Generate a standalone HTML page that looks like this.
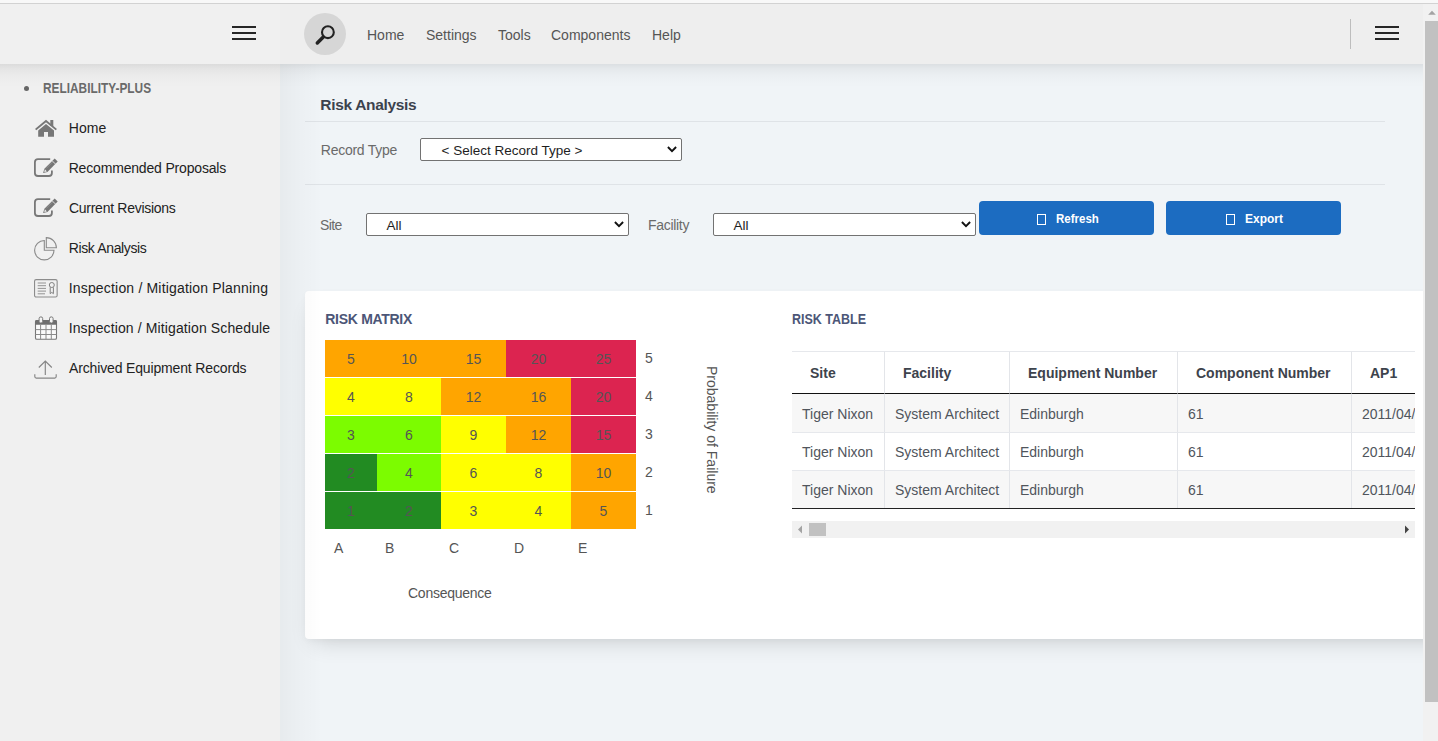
<!DOCTYPE html>
<html lang="en">
<head>
<meta charset="utf-8">
<title>Risk Analysis</title>
<style>
*{box-sizing:border-box;margin:0;padding:0}
html,body{width:1438px;height:741px;overflow:hidden}
body{position:relative;background:#f0f4f7;font-family:"Liberation Sans",sans-serif;font-size:14px;color:#555}
.abs{position:absolute}
.t{position:absolute;white-space:nowrap;line-height:20px;height:20px}
/* top chrome strip */
#strip{left:0;top:0;width:1438px;height:3px;background:#f8f8f8}
#stripline{left:0;top:3px;width:1438px;height:1px;background:#d2d2d2}
/* header */
#hdrL{left:0;top:4px;width:280px;height:60px;background:#f0f0f0}
#hdrR{left:280px;top:4px;width:1143px;height:60px;background:#eeeeee}
#hdrShadow{left:0;top:64px;width:1423px;height:24px;z-index:6;background:linear-gradient(to bottom,rgba(0,0,0,.088),rgba(0,0,0,.048) 20%,rgba(0,0,0,.024) 45%,rgba(0,0,0,.008) 75%,rgba(0,0,0,0))}
/* sidebar */
#side{left:0;top:64px;width:280px;height:677px;background:#f0f0f0}
#sideShadow{left:280px;top:64px;width:42px;height:677px;z-index:5;background:linear-gradient(to right,rgba(0,0,0,.04),rgba(0,0,0,.027) 25%,rgba(0,0,0,.016) 55%,rgba(0,0,0,.006) 82%,rgba(0,0,0,0))}
.nav{color:#555;font-size:14px}
.sb{color:#222;font-size:14px}
.ico{position:absolute;overflow:visible}
/* page scrollbar */
#sbTrack{left:1423px;top:4px;width:15px;height:737px;background:#f1f1f1}
#sbThumb{left:1425px;top:21px;width:13px;height:681px;background:#c1c1c1}
/* content */
.hr{position:absolute;left:305px;width:1080px;height:1px;background:#dfe3e7}
.sel{position:absolute;height:23px;width:263px;background:#fff;border:1px solid #727272;border-radius:2px}
.sel span{position:absolute;top:1.7px;line-height:20px;font-size:13.5px;color:#1e1e1e;white-space:nowrap}
.sel svg{position:absolute;right:4px;top:7px}
.btn{position:absolute;top:201px;width:175px;height:34px;background:#1c6cc1;border-radius:4px;color:#fff;font-weight:bold;font-size:13.5px}
.btn i{position:absolute;top:13px;width:9px;height:11px;border:1.2px solid #fff}
.btn span{position:absolute;top:8px;line-height:20px;white-space:nowrap;transform-origin:0 50%}
/* card */
#card{left:305px;top:291px;width:1170px;height:348px;background:#fff;border-radius:4px 0 0 4px;box-shadow:0 11px 22px -9px rgba(0,0,0,.16),0 2px 6px rgba(0,0,0,.03)}
.ctitle{font-weight:bold;font-size:14px;color:#4c5677;transform-origin:0 50%}
/* matrix */
.cell{position:absolute;height:37px;line-height:39px;text-align:center;font-size:14px;color:#555}
.or{background:#ffa500}.cr{background:#dc2450}.ye{background:#ffff00}.lg{background:#7cfc00}.fg{background:#228b22}
.lab{color:#555;font-size:14px}
/* table */
#tblwrap{left:792px;top:351px;width:623px;height:159px;overflow:hidden}
.th{position:absolute;top:0;height:43px;border-top:1px solid #e6e8ec;border-bottom:1px solid #111;border-right:1px solid #e3e5e9;font-weight:bold;font-size:14px;color:#3d434c;line-height:42px;padding-left:18px;white-space:nowrap}
.td{position:absolute;height:38px;border-right:1px solid #e3e5e9;border-top:1px solid #e6e8ec;font-size:14px;color:#50555c;line-height:38px;padding-left:10px;white-space:nowrap}
.odd{background:#f7f7f7}
</style>
</head>
<body>
<!-- sidebar + header backgrounds -->
<div id="side" class="abs"></div>
<div id="sideShadow" class="abs"></div>
<div id="hdrShadow" class="abs"></div>
<div id="hdrL" class="abs"></div>
<div id="hdrR" class="abs"></div>
<div id="strip" class="abs"></div>
<div id="stripline" class="abs"></div>

<!-- header contents -->
<svg class="ico" style="left:232px;top:25px" width="24" height="16" viewBox="0 0 24 16"><path d="M0 2H24M0 8H24M0 14H24" stroke="#262626" stroke-width="2"/></svg>
<div class="abs" style="left:304px;top:13px;width:42px;height:42px;border-radius:50%;background:#d6d6d6"></div>
<svg class="ico" style="left:315px;top:24px" width="21" height="21" viewBox="0 0 21 21"><circle cx="12.9" cy="8.2" r="5.9" fill="none" stroke="#222" stroke-width="2.1"/><path d="M8.3 12.9 L2.3 19" stroke="#222" stroke-width="3.5" stroke-linecap="round"/></svg>
<span class="t nav" style="left:367px;top:25px">Home</span>
<span class="t nav" style="left:426px;top:25px">Settings</span>
<span class="t nav" style="left:498px;top:25px">Tools</span>
<span class="t nav" style="left:551px;top:25px">Components</span>
<span class="t nav" style="left:652px;top:25px">Help</span>
<div class="abs" style="left:1350px;top:19px;width:1px;height:30px;background:#bdbdbd"></div>
<svg class="ico" style="left:1375px;top:25px" width="24" height="16" viewBox="0 0 24 16"><path d="M0 2H24M0 8H24M0 14H24" stroke="#262626" stroke-width="2"/></svg>

<!-- sidebar contents -->
<div class="abs" style="left:24px;top:86px;width:5.3px;height:5.3px;border-radius:50%;background:#666"></div>
<span class="t" style="left:43.4px;top:78.2px;font-weight:bold;font-size:14.4px;color:#6a6a6a;transform-origin:0 50%;transform:scaleX(0.824)">RELIABILITY-PLUS</span>
<span class="t sb" style="left:68.7px;top:118.3px;letter-spacing:.1px">Home</span>
<span class="t sb" style="left:68.7px;top:158.3px;letter-spacing:-.175px">Recommended Proposals</span>
<span class="t sb" style="left:69px;top:198.3px;letter-spacing:-.275px">Current Revisions</span>
<span class="t sb" style="left:68.7px;top:238.3px;letter-spacing:-.36px">Risk Analysis</span>
<span class="t sb" style="left:68.7px;top:278.3px;letter-spacing:.18px">Inspection / Mitigation Planning</span>
<span class="t sb" style="left:68.7px;top:318.3px;letter-spacing:.12px">Inspection / Mitigation Schedule</span>
<span class="t sb" style="left:69px;top:358.3px;letter-spacing:-.15px">Archived Equipment Records</span>
<!-- icons -->
<svg class="ico" style="left:34px;top:118px" width="24" height="20" viewBox="0 0 24 20"><path d="M2.4 11 L12 2.9 L21.6 11" fill="none" stroke="#777" stroke-width="1.9" stroke-linecap="square"/><rect x="16.3" y="2" width="3" height="6" fill="#777"/><path d="M12 6 L4.2 12.5 V18.8 H10 V14 H14 V18.8 H20 V12.5 Z" fill="#777"/></svg>

<svg class="ico" style="left:33px;top:157px" width="26" height="22" viewBox="0 0 26 22"><path d="M17.2 2.15 H5 Q1.9 2.15 1.9 5.2 V16 Q1.9 19 5 19 H15.9 Q18.9 19 18.9 16 V13.4" fill="none" stroke="#787878" stroke-width="1.8"/><path d="M21.7 1.5 L24.7 4.6 L14.4 14.9 L10.1 16.1 L11.4 11.8 Z" fill="#757575"/><path d="M19.3 3.9 L22.3 6.9" stroke="#f0f0f0" stroke-width="0.9"/><path d="M11.9 12.3 L13.9 14.4 L11.3 15 Z" fill="#f0f0f0"/><path d="M13.2 11.5 L20 4.7" stroke="#9a9a9a" stroke-width="0.7"/></svg>
<svg class="ico" style="left:33px;top:197px" width="26" height="22" viewBox="0 0 26 22"><path d="M17.2 2.15 H5 Q1.9 2.15 1.9 5.2 V16 Q1.9 19 5 19 H15.9 Q18.9 19 18.9 16 V13.4" fill="none" stroke="#787878" stroke-width="1.8"/><path d="M21.7 1.5 L24.7 4.6 L14.4 14.9 L10.1 16.1 L11.4 11.8 Z" fill="#757575"/><path d="M19.3 3.9 L22.3 6.9" stroke="#f0f0f0" stroke-width="0.9"/><path d="M11.9 12.3 L13.9 14.4 L11.3 15 Z" fill="#f0f0f0"/><path d="M13.2 11.5 L20 4.7" stroke="#9a9a9a" stroke-width="0.7"/></svg>
<svg class="ico" style="left:33px;top:236px" width="25" height="25" viewBox="0 0 25 25"><path d="M11.3 4.5 A9.7 9.7 0 1 0 21 14.2 H11.3 Z" fill="none" stroke="#8a8a8a" stroke-width="1.1"/><path d="M13.3 1.6 A10.1 10.1 0 0 1 23.4 11.7 H13.3 Z" fill="none" stroke="#8a8a8a" stroke-width="1.1"/></svg>
<svg class="ico" style="left:33px;top:278px" width="26" height="21" viewBox="0 0 26 21"><rect x="1.55" y="1.65" width="22.6" height="17.4" rx="1.6" fill="none" stroke="#8c8c8c" stroke-width="1.1"/><path d="M4.7 5H13M4.7 7.7H13M4.7 10.4H13M4.7 13.1H13M4.7 15.8H12" stroke="#888" stroke-width="0.9"/><circle cx="18.8" cy="7" r="2.5" fill="none" stroke="#808080" stroke-width="1"/><path d="M17.2 9.3 V15.7 L18.8 14.4 L20.4 15.7 V9.3" fill="none" stroke="#808080" stroke-width="1"/></svg>
<svg class="ico" style="left:34px;top:316px" width="24" height="25" viewBox="0 0 24 25"><rect x="1.5" y="4.5" width="21" height="18.7" rx="1.3" fill="#fafafa" stroke="#777" stroke-width="1.1"/><path d="M1 8.8 V5.5 Q1 4 2.5 4 H21.5 Q23 4 23 5.5 V8.8 Z" fill="#6f6f6f"/><rect x="5.1" y="0.9" width="3.6" height="6.2" rx="1.7" fill="#f4f4f4" stroke="#777" stroke-width="1"/><rect x="15.5" y="0.9" width="3.6" height="6.2" rx="1.7" fill="#f4f4f4" stroke="#777" stroke-width="1"/><path d="M6.6 8.8V23.2M12 8.8V23.2M17.3 8.8V23.2M1.5 13.6H22.5M1.5 18.5H22.5" stroke="#8a8a8a" stroke-width="1"/></svg>
<svg class="ico" style="left:33px;top:359px" width="25" height="22" viewBox="0 0 25 22"><path d="M12.3 2.2 V16 M5.8 8.5 L12.3 2 L18.8 8.5" fill="none" stroke="#868686" stroke-width="1.15"/><path d="M1.8 15.3 V17.6 Q1.8 19.1 3.3 19.1 H21.7 Q23.2 19.1 23.2 17.6 V15.3" fill="none" stroke="#868686" stroke-width="1.15"/></svg>

<!-- main content -->
<span class="t" style="left:320.3px;top:94.5px;font-weight:bold;font-size:15.5px;letter-spacing:-.32px;color:#3c424d">Risk Analysis</span>
<div class="hr" style="top:121px"></div>
<span class="t" style="left:320.8px;top:140px;font-size:14px;letter-spacing:-.26px;color:#6a6a6a">Record Type</span>
<div class="sel" style="left:420px;top:138px;width:262px"><span id="s1" style="left:20.5px">&lt; Select Record Type &gt;</span><svg width="10" height="7" viewBox="0 0 10 7"><path d="M0.9 1 L5 5.1 L9.1 1" fill="none" stroke="#111" stroke-width="1.9"/></svg></div>
<div class="hr" style="top:184px"></div>
<span class="t" style="left:320px;top:215.2px;font-size:14px;letter-spacing:-.6px;color:#6a6a6a">Site</span>
<div class="sel" style="left:366px;top:213px"><span id="s2" style="left:19.5px">All</span><svg width="10" height="7" viewBox="0 0 10 7"><path d="M0.9 1 L5 5.1 L9.1 1" fill="none" stroke="#111" stroke-width="1.9"/></svg></div>
<span class="t" style="left:648px;top:215.2px;font-size:14px;letter-spacing:-.3px;color:#6a6a6a">Facility</span>
<div class="sel" style="left:713px;top:213px"><span id="s3" style="left:19.5px">All</span><svg width="10" height="7" viewBox="0 0 10 7"><path d="M0.9 1 L5 5.1 L9.1 1" fill="none" stroke="#111" stroke-width="1.9"/></svg></div>
<div class="btn" style="left:979px"><i style="left:58px"></i><span style="left:77px;transform:scaleX(.852)">Refresh</span></div>
<div class="btn" style="left:1166px"><i style="left:60px"></i><span style="left:78.5px;transform:scaleX(.886)">Export</span></div>

<!-- card -->
<div id="card" class="abs"></div>
<span class="t ctitle" style="left:325.3px;top:309.2px;letter-spacing:-.3px">RISK MATRIX</span>
<span class="t ctitle" style="left:792.2px;top:309.2px;transform:scaleX(.892)">RISK TABLE</span>

<!-- matrix -->
<div id="mx" class="abs" style="left:325px;top:340px;width:311px;height:189px">
<div class="cell or" style="left:0;top:0;width:52px">5</div><div class="cell or" style="left:52px;top:0;width:64px">10</div><div class="cell or" style="left:116px;top:0;width:65px">15</div><div class="cell cr" style="left:181px;top:0;width:65px">20</div><div class="cell cr" style="left:246px;top:0;width:65px">25</div>
<div class="cell ye" style="left:0;top:38px;width:52px">4</div><div class="cell ye" style="left:52px;top:38px;width:64px">8</div><div class="cell or" style="left:116px;top:38px;width:65px">12</div><div class="cell or" style="left:181px;top:38px;width:65px">16</div><div class="cell cr" style="left:246px;top:38px;width:65px">20</div>
<div class="cell lg" style="left:0;top:76px;width:52px">3</div><div class="cell lg" style="left:52px;top:76px;width:64px">6</div><div class="cell ye" style="left:116px;top:76px;width:65px">9</div><div class="cell or" style="left:181px;top:76px;width:65px">12</div><div class="cell cr" style="left:246px;top:76px;width:65px">15</div>
<div class="cell fg" style="left:0;top:114px;width:52px">2</div><div class="cell lg" style="left:52px;top:114px;width:64px">4</div><div class="cell ye" style="left:116px;top:114px;width:65px">6</div><div class="cell ye" style="left:181px;top:114px;width:65px">8</div><div class="cell or" style="left:246px;top:114px;width:65px">10</div>
<div class="cell fg" style="left:0;top:152px;width:52px">1</div><div class="cell fg" style="left:52px;top:152px;width:64px">2</div><div class="cell ye" style="left:116px;top:152px;width:65px">3</div><div class="cell ye" style="left:181px;top:152px;width:65px">4</div><div class="cell or" style="left:246px;top:152px;width:65px">5</div>
</div>
<span class="t lab" style="left:645px;top:348.2px">5</span>
<span class="t lab" style="left:645px;top:386.2px">4</span>
<span class="t lab" style="left:645px;top:424.2px">3</span>
<span class="t lab" style="left:645px;top:462.2px">2</span>
<span class="t lab" style="left:645px;top:500.2px">1</span>
<span class="t lab" style="left:334px;top:538px">A</span>
<span class="t lab" style="left:385px;top:538px">B</span>
<span class="t lab" style="left:449px;top:538px">C</span>
<span class="t lab" style="left:514px;top:538px">D</span>
<span class="t lab" style="left:578px;top:538px">E</span>
<span class="t lab" style="left:408px;top:583px;letter-spacing:-.26px">Consequence</span>
<span class="t lab" id="pof" style="left:722px;top:366px;transform-origin:0 0;transform:rotate(90deg)">Probability of Failure</span>

<!-- table -->
<div id="tblwrap" class="abs">
<div class="th" style="left:0;width:93px">Site</div><div class="th" style="left:93px;width:125px">Facility</div><div class="th" style="left:218px;width:168px">Equipment Number</div><div class="th" style="left:386px;width:174px">Component Number</div><div class="th" style="left:560px;width:120px">AP1</div>
<div class="td odd" style="top:43px;left:0;width:93px;border-top:0;line-height:40px">Tiger Nixon</div><div class="td odd" style="top:43px;left:93px;width:125px;border-top:0;line-height:40px">System Architect</div><div class="td odd" style="top:43px;left:218px;width:168px;border-top:0;line-height:40px">Edinburgh</div><div class="td odd" style="top:43px;left:386px;width:174px;border-top:0;line-height:40px">61</div><div class="td odd" style="top:43px;left:560px;width:120px;border-top:0;line-height:40px">2011/04/25</div>
<div class="td" style="top:81px;left:0;width:93px">Tiger Nixon</div><div class="td" style="top:81px;left:93px;width:125px">System Architect</div><div class="td" style="top:81px;left:218px;width:168px">Edinburgh</div><div class="td" style="top:81px;left:386px;width:174px">61</div><div class="td" style="top:81px;left:560px;width:120px">2011/04/25</div>
<div class="td odd" style="top:119px;left:0;width:93px">Tiger Nixon</div><div class="td odd" style="top:119px;left:93px;width:125px">System Architect</div><div class="td odd" style="top:119px;left:218px;width:168px">Edinburgh</div><div class="td odd" style="top:119px;left:386px;width:174px">61</div><div class="td odd" style="top:119px;left:560px;width:120px">2011/04/25</div>
<div class="abs" style="left:0;top:157px;width:700px;height:1px;background:#222"></div>
</div>
<!-- horizontal scrollbar -->
<div class="abs" style="left:792px;top:521px;width:623px;height:17px;background:#f1f1f1"></div>
<div class="abs" style="left:809px;top:523px;width:17px;height:13px;background:#c1c1c1"></div>
<svg class="ico" style="left:797px;top:525px" width="6" height="9" viewBox="0 0 6 9"><path d="M5 0.5 L1 4.5 L5 8.5 Z" fill="#a3a3a3"/></svg>
<svg class="ico" style="left:1404px;top:525px" width="6" height="9" viewBox="0 0 6 9"><path d="M1 0.5 L5 4.5 L1 8.5 Z" fill="#444"/></svg>


<!-- page scrollbar -->
<div id="sbTrack" class="abs"></div>
<div id="sbThumb" class="abs"></div>
<svg class="ico" style="left:1426.5px;top:9px" width="10" height="6" viewBox="0 0 10 6"><path d="M1.2 5.8 L5 1.8 L8.8 5.8 Z" fill="#a3a3a3"/></svg>
</body>
</html>
